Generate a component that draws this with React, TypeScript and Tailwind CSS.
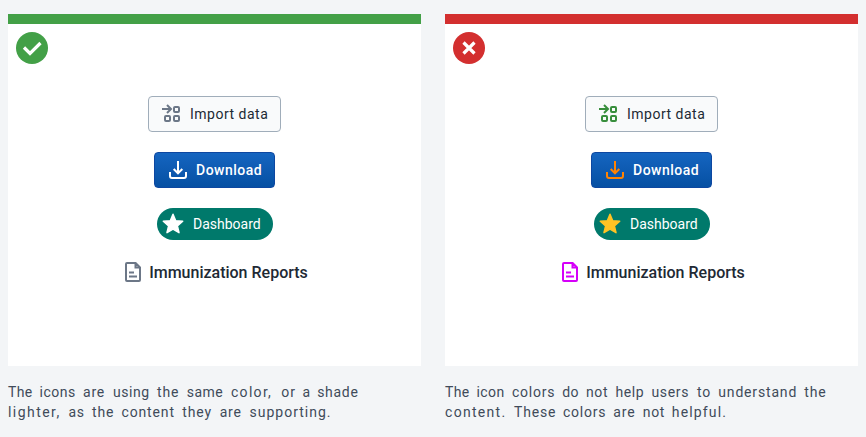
type Palette = {
  importIcon: string;
  downloadIcon: string;
  star: string;
  document: string;
};

const matching: Palette = {
  importIcon: "text-[#6c7787]",
  downloadIcon: "text-white",
  star: "text-white",
  document: "text-[#6c7787]",
};

const clashing: Palette = {
  importIcon: "text-[#388e3c]",
  downloadIcon: "text-[#ff8302]",
  star: "text-[#ffc324]",
  document: "text-[#d500f9]",
};

// Each caption word carries its advance and letter spacing in pixels.
type Word = [text: string, advance: number, tracking: number];

const goodCaption: Word[][] = [
  [["The", 31.5, 0.3], ["icons", 43.5, 0.5], ["are", 30, 0.8], ["using", 44, 0.55], ["the", 29.7, 0.85], ["same", 44.3, 0.5], ["color,", 50.2, 1.3], ["or", 21.3, 1], ["a", 14.7, 0], ["shade", 42, 0.7]],
  [["lighter,", 60.500, 1.45], ["as", 23.5, 0.7], ["the", 29.5, 0.85], ["content", 60.7, 0.85], ["they", 37.5, 0.9], ["are", 29.8, 0.8], ["supporting.", 83, 1]],
];

const badCaption: Word[][] = [
  [["The", 31.5, 0.3], ["icon", 35.5, 0.4], ["colors", 50.3, 0.75], ["do", 23.6, 0.2], ["not", 29.5, 0.65], ["help", 36, 0.6], ["users", 45.6, 0.7], ["to", 21.3, 0.8], ["understand", 86, 0.83], ["the", 24, 0.85]],
  [["content.", 69, 1.3], ["These", 49, 0.8], ["colors", 50.3, 0.75], ["are", 29.5, 0.8], ["not", 29, 0.65], ["helpful.", 57, 1.15]],
];

function ImportIcon({ className }: { className: string }) {
  return (
    <svg width="24" height="24" viewBox="0 0 24 24" fill="none" stroke="currentColor" strokeWidth="2" className={className}>
      <path d="M2 7h8.5M7 3l4 4-4 4" />
      <rect x="14" y="5" width="5" height="5" rx="1" />
      <rect x="5" y="14" width="5" height="5" rx="1" />
      <rect x="14" y="14" width="5" height="5" rx="1" />
    </svg>
  );
}

function DownloadIcon({ className }: { className: string }) {
  return (
    <svg width="24" height="24" viewBox="0 0 24 24" fill="none" stroke="currentColor" strokeWidth="2" className={className}>
      <path d="M12 3v12.500M7.700 11 12 15.300l4.300-4.300M4 14v4a2 2 0 0 0 2 2h12a2 2 0 0 0 2-2v-4" />
    </svg>
  );
}

function StarIcon({ className }: { className: string }) {
  return (
    <svg width="24" height="24" viewBox="0 0 24 24" fill="currentColor" stroke="currentColor" strokeWidth="1.500" strokeLinejoin="round" className={className}>
      <path d="m12 2.300 2.700 6.400 7 .6-5.300 4.600 1.600 6.800-6-3.600-6 3.600 1.600-6.800-5.300-4.600 7-.6z" />
    </svg>
  );
}

function DocumentIcon({ className }: { className: string }) {
  return (
    <svg width="24" height="24" viewBox="0 0 24 24" fill="none" stroke="currentColor" strokeWidth="2" className={className}>
      <path d="M14.600 3H6a1 1 0 0 0-1 1v16a1 1 0 0 0 1 1h12a1 1 0 0 0 1-1V7.400zM14.500 3v4.500H19M8 12.500h5M8 16.500h8" />
    </svg>
  );
}

function Examples({ palette }: { palette: Palette }) {
  return (
    <div className="mt-8 flex flex-col items-center">
      <button className="flex h-9 w-[133px] items-center rounded border border-[#a0adba] bg-[#f9fafb] pl-[11px] text-sm tracking-[0.5px] text-[#212934]">
        <ImportIcon className={palette.importIcon} />
        <span className="ml-1.5 whitespace-nowrap">Import data</span>
      </button>
      <button className="mt-5 flex h-9 w-[121px] items-center rounded border border-[#0d47a1] bg-linear-to-b from-[#1565c0] to-[#0650a3] pl-[11px] text-sm font-medium tracking-[0.5px] text-white">
        <DownloadIcon className={palette.downloadIcon} />
        <span className="ml-1.5">Download</span>
      </button>
      <div className="mt-5 flex h-8 w-[116px] items-center rounded-full bg-[#00796b] pl-1 text-sm text-white">
        <StarIcon className={palette.star} />
        <span className="ml-[8.5px]">Dashboard</span>
      </div>
      <div className="mt-5 flex h-6 items-center text-base font-medium text-[#212934]">
        <DocumentIcon className={palette.document} />
        <span className="ml-1 pt-0.5 whitespace-nowrap">Immunization Reports</span>
      </div>
    </div>
  );
}

function Column({ good, caption }: { good: boolean; caption: Word[][] }) {
  return (
    <section className="w-[413px]">
      <div className={`h-[352px] border-t-10 bg-white px-2 pt-2 ${good ? "border-[#43a047]" : "border-[#d32f2f]"}`}>
        <div className={`flex size-8 items-center justify-center rounded-full ${good ? "bg-[#43a047]" : "bg-[#d32f2f]"}`}>
          <svg width="32" height="32" viewBox="0 0 32 32" fill="none" stroke="white" strokeWidth="3.200">
            <path d={good ? "m8 15.500 6 6L24.500 11" : "m10.500 10.500 11 11m0-11-11 11"} />
          </svg>
        </div>
        <Examples palette={good ? matching : clashing} />
      </div>
      <div className="mt-4 text-sm leading-5 text-[#404b5a]">
        {caption.map((line, row) => (
          <p key={row} className="flex whitespace-pre">
            {line.map(([text, advance, tracking], i) => (
              <span key={i} className="shrink-0" style={{ width: advance, letterSpacing: tracking }}>
                {text + (i < line.length - 1 ? " " : "")}
              </span>
            ))}
          </p>
        ))}
      </div>
    </section>
  );
}

export default function App() {
  return (
    <main className="flex h-[437px] w-[866px] gap-6 bg-[#f3f5f7] px-2 pt-3.5 font-[Roboto,sans-serif]">
      <Column good caption={goodCaption} />
      <Column good={false} caption={badCaption} />
    </main>
  );
}
